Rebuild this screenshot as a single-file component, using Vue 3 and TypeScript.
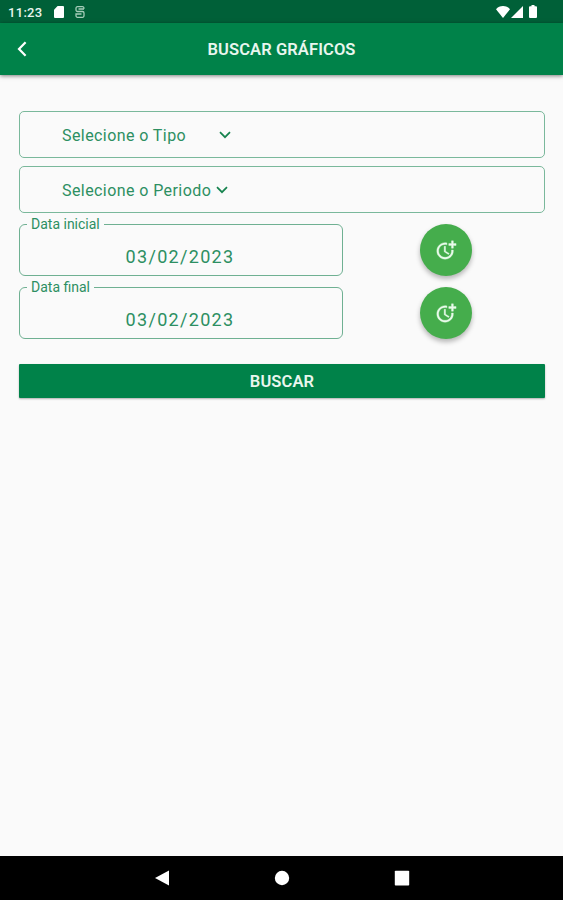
<script setup lang="ts">
import { ref } from 'vue'

interface SelectField {
  label: string
  wide: boolean
}

interface DateField {
  label: string
  value: string
}

const selects = ref<SelectField[]>([
  { label: 'Selecione o Tipo', wide: true },
  { label: 'Selecione o Periodo', wide: false },
])

const dates = ref<DateField[]>([
  { label: 'Data inicial', value: '03/02/2023' },
  { label: 'Data final', value: '03/02/2023' },
])
</script>

<template>
  <div class="screen">
    <div class="status">
      <span class="clock">11:23</span>
      <svg class="sd" viewBox="0 0 10 12"><path d="M3.6 0H9a1 1 0 0 1 1 1v10a1 1 0 0 1-1 1H1a1 1 0 0 1-1-1V3.8z" /></svg>
      <svg class="debug" viewBox="0 0 10 12">
        <path d="M9 2.800V2.200A1.500 1.500 0 0 0 7.500.7h-5A1.500 1.500 0 0 0 1 2.200v1.800a1.500 1.500 0 0 0 1.500 1.500h5A1.500 1.500 0 0 1 9 7v2.800a1.500 1.500 0 0 1-1.500 1.500h-5A1.500 1.500 0 0 1 1 9.800V8h5.500M3.500 3h5.500" />
      </svg>
      <div class="system">
        <svg class="wifi" viewBox="0 0 14 12"><path d="M7 12 0 3.200C1.800 1.200 4.200 0 7 0s5.200 1.200 7 3.200z" /></svg>
        <svg class="signal" viewBox="0 0 12 12"><path d="M12 0v12H0z" /></svg>
        <svg class="battery" viewBox="0 0 8 13"><path d="M2.500 0h3v1.300H7a1 1 0 0 1 1 1V12a1 1 0 0 1-1 1H1a1 1 0 0 1-1-1V2.300a1 1 0 0 1 1-1h1.500z" /></svg>
      </div>
    </div>

    <header class="appbar">
      <button class="back" aria-label="Voltar">
        <svg viewBox="0 0 10 16"><path d="M8.600 1.200 2 8l6.600 6.800" /></svg>
      </button>
      <h1>BUSCAR GRÁFICOS</h1>
    </header>

    <main class="content">
      <div v-for="s in selects" :key="s.label" class="select">
        <span class="select-label" :class="{ wide: s.wide }">{{ s.label }}</span>
        <svg class="chevron" viewBox="0 0 12 8"><path d="M1 1.200 6 6.200l5-5" /></svg>
      </div>

      <div class="dates">
        <div v-for="d in dates" :key="d.label" class="date-row">
          <div class="date">
            <span class="date-label">{{ d.label }}</span>
            <span class="date-value">{{ d.value }}</span>
          </div>
          <div class="action">
            <button class="fab" :aria-label="d.label">
              <svg viewBox="0 0 24 24">
                <path d="M10 8v6l4.700 2.900.8-1.200-4-2.400V8z" />
                <path d="M17.920 12c.05.33.08.66.08 1 0 3.900-3.100 7-7 7s-7-3.100-7-7 3.100-7 7-7c.7 0 1.370.1 2 .29V4.230C12.360 4.080 11.690 4 11 4c-5 0-9 4-9 9s4 9 9 9 9-4 9-9c0-.34-.02-.67-.06-1z" />
                <path d="M20 5V2h-2v3h-3v2h3v3h2V7h3V5z" />
              </svg>
            </button>
          </div>
        </div>
      </div>

      <button class="submit">BUSCAR</button>
    </main>

    <nav class="navbar">
      <svg viewBox="0 0 16 16"><path d="M15 .5v15L1 8z" /></svg>
      <svg viewBox="0 0 16 16"><circle cx="8" cy="8" r="7.200" /></svg>
      <svg viewBox="0 0 16 16"><rect x=".8" y=".8" width="14.400" height="14.800" rx=".8" /></svg>
    </nav>
  </div>
</template>

<style>
body {
  margin: 0;
  background: #fafafa;
}
</style>

<style scoped>
.screen {
  display: flex;
  flex-direction: column;
  height: 900px;
  background: #fafafa;
  font-family: Roboto, "Liberation Sans", sans-serif;
  color: #2d8f62;
}
button {
  border: 0;
  padding: 0;
  font-family: inherit;
}
.status {
  display: flex;
  align-items: center;
  height: 23px;
  padding: 0 25px 0 8px;
  box-sizing: border-box;
  background: #006038;
}
.status svg {
  fill: #fff;
}
.clock {
  width: 46px;
  padding-top: 1px;
  font-size: 13px;
  font-weight: 500;
  letter-spacing: 0.3px;
  color: #e9f5ee;
}
.sd {
  width: 10px;
  height: 12px;
}
.status .debug {
  width: 10px;
  height: 12px;
  margin-left: 11px;
  fill: none;
  stroke: #a5cdb9;
  stroke-width: 1.3;
}
.system {
  display: flex;
  align-items: center;
  margin-left: auto;
}
.wifi {
  width: 14px;
  height: 12px;
}
.signal {
  width: 12px;
  height: 12px;
  margin: 0 6px 0 1px;
}
.battery {
  width: 8px;
  height: 13px;
  margin-right: 1px;
}
.appbar {
  display: grid;
  grid-template-columns: 44px 1fr 44px;
  align-items: center;
  height: 52px;
  background: #008249;
  box-shadow: 0 1px 4px rgba(0, 0, 0, 0.5);
}
.appbar h1 {
  margin: 1px 0 0;
  text-align: center;
  font-size: 16.500px;
  font-weight: 600;
  line-height: 20px;
  letter-spacing: 0.1px;
  color: #e9f6ee;
}
.back {
  display: flex;
  justify-content: center;
  background: none;
}
.back svg {
  width: 10px;
  height: 16px;
  fill: none;
  stroke: #fff;
  stroke-width: 2.200;
}
.content {
  flex: 1;
  display: flex;
  flex-direction: column;
  padding: 36px 18px 0 19px;
}
.select {
  display: flex;
  align-items: center;
  height: 47px;
  box-sizing: border-box;
  margin-bottom: 8px;
  padding-left: 42px;
  border: 1px solid #7ab89b;
  border-radius: 5px;
}
.select-label {
  padding-top: 1px;
  margin-right: 5px;
  font-size: 16px;
  letter-spacing: 0.42px;
}
.select-label.wide {
  width: 152px;
}
.chevron {
  width: 12px;
  height: 8px;
  fill: none;
  stroke: #16834e;
  stroke-width: 1.700;
}
.dates {
  display: flex;
  flex-direction: column;
  gap: 11px;
  margin: 3px 0 25px;
}
.date-row {
  display: flex;
  height: 52px;
}
.date {
  position: relative;
  width: 324px;
  box-sizing: border-box;
  border: 1px solid #6fb092;
  border-radius: 6px;
  text-align: center;
}
.date-label {
  position: absolute;
  top: -10px;
  left: 7px;
  padding: 0 4px;
  background: #fafafa;
  font-size: 14px;
  line-height: 18px;
}
.date-value {
  display: block;
  padding: 21px 2px 0 0;
  font-size: 18px;
  line-height: 22px;
  letter-spacing: 1.300px;
}
.action {
  flex: 1;
  display: flex;
  justify-content: center;
  padding-left: 4px;
}
.fab {
  display: flex;
  align-items: center;
  justify-content: center;
  width: 52px;
  height: 52px;
  border-radius: 50%;
  background: #45ad4c;
  box-shadow: 0 3px 5px rgba(0, 0, 0, 0.28);
}
.fab svg {
  width: 22px;
  height: 22px;
  fill: #eafbeb;
  stroke: #eafbeb;
  stroke-width: 0.400;
}
.submit {
  height: 34px;
  padding-top: 1px;
  background: #008249;
  box-shadow: 0 1px 2px rgba(0, 0, 0, 0.3);
  border-radius: 1px;
  font-size: 16.500px;
  font-weight: 600;
  letter-spacing: 0.1px;
  color: #e9f6ee;
}
.navbar {
  display: flex;
  justify-content: center;
  align-items: center;
  gap: 104px;
  height: 44px;
  background: #000;
}
.navbar svg {
  width: 16px;
  height: 16px;
  fill: #fff;
}
</style>
